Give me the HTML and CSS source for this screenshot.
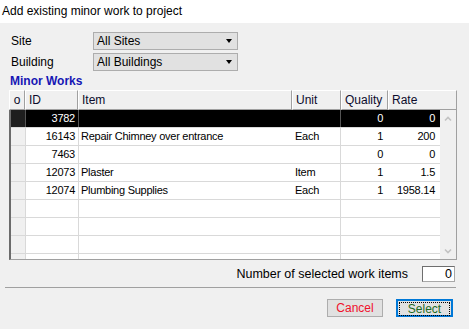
FILE: index.html
```html
<!DOCTYPE html>
<html>
<head>
<meta charset="utf-8">
<link rel="stylesheet" href="styles.css">
</head>
<body>
<div class="titlebar">Add existing minor work to project</div>
<div class="content">
  <div class="field">
    <span class="label">Site</span>
    <div class="combo"><span>All Sites</span><span class="arrow"></span></div>
  </div>
  <div class="field">
    <span class="label">Building</span>
    <div class="combo"><span>All Buildings</span><span class="arrow"></span></div>
  </div>
  <div class="section">Minor Works</div>
  <div class="grid">
    <div class="ghead">
      <div class="hc h-o">o</div>
      <div class="hc h-id">ID</div>
      <div class="hc h-item">Item</div>
      <div class="hc h-unit">Unit</div>
      <div class="hc h-qty">Quality</div>
      <div class="hc h-rate">Rate</div>
    </div>
    <div class="gbody">
      <div class="rows">
        <div class="row sel"><div class="c c-o"></div><div class="c c-id">3782</div><div class="c c-item"></div><div class="c c-unit"></div><div class="c c-qty">0</div><div class="c c-rate">0</div></div>
        <div class="row"><div class="c c-o"></div><div class="c c-id">16143</div><div class="c c-item">Repair Chimney over entrance</div><div class="c c-unit">Each</div><div class="c c-qty">1</div><div class="c c-rate">200</div></div>
        <div class="row"><div class="c c-o"></div><div class="c c-id">7463</div><div class="c c-item"></div><div class="c c-unit"></div><div class="c c-qty">0</div><div class="c c-rate">0</div></div>
        <div class="row"><div class="c c-o"></div><div class="c c-id">12073</div><div class="c c-item">Plaster</div><div class="c c-unit">Item</div><div class="c c-qty">1</div><div class="c c-rate">1.5</div></div>
        <div class="row"><div class="c c-o"></div><div class="c c-id">12074</div><div class="c c-item">Plumbing Supplies</div><div class="c c-unit">Each</div><div class="c c-qty">1</div><div class="c c-rate">1958.14</div></div>
        <div class="row"><div class="c c-o"></div><div class="c c-id"></div><div class="c c-item"></div><div class="c c-unit"></div><div class="c c-qty"></div><div class="c c-rate"></div></div>
        <div class="row"><div class="c c-o"></div><div class="c c-id"></div><div class="c c-item"></div><div class="c c-unit"></div><div class="c c-qty"></div><div class="c c-rate"></div></div>
        <div class="row"><div class="c c-o"></div><div class="c c-id"></div><div class="c c-item"></div><div class="c c-unit"></div><div class="c c-qty"></div><div class="c c-rate"></div></div>
        <div class="row"><div class="c c-o"></div><div class="c c-id"></div><div class="c c-item"></div><div class="c c-unit"></div><div class="c c-qty"></div><div class="c c-rate"></div></div>
      </div>
      <div class="vscroll">
        <svg class="chev" width="16" height="17" viewBox="0 0 16 17"><path d="M5 10.5 L8 7.5 L11 10.5" fill="none" stroke="#c2c2c2" stroke-width="1.6"/></svg>
        <svg class="chev" width="16" height="17" viewBox="0 0 16 17"><path d="M5 7.5 L8 10.5 L11 7.5" fill="none" stroke="#c2c2c2" stroke-width="1.6"/></svg>
      </div>
    </div>
  </div>
  <div class="countrow">
    <span class="countlabel">Number of selected work items</span>
    <div class="countbox">0</div>
  </div>
  <div class="sep"></div>
  <div class="buttons">
    <div class="btn cancel">Cancel</div>
    <div class="btn select"><span class="focus">Select</span></div>
  </div>
</div>
</body>
</html>
```
FILE: styles.css
```css
html, body {
  margin: 0;
  padding: 0;
}
body {
  width: 469px;
  height: 329px;
  background: #f0f0f0;
  font-family: "Liberation Sans", Arial, sans-serif;
  font-size: 12px;
  color: #000;
  overflow: hidden;
}
.titlebar {
  height: 23px;
  line-height: 22px;
  background: #fff;
  padding-left: 2px;
  box-sizing: border-box;
}
.content {
  padding-top: 9px;
}
.field {
  display: flex;
  align-items: center;
  height: 18px;
  margin-bottom: 3px;
  padding-left: 11px;
}
.label {
  width: 82px;
}
.combo {
  width: 145px;
  height: 18px;
  box-sizing: border-box;
  border: 1px solid #adadad;
  background: #e1e1e1;
  display: flex;
  align-items: center;
  justify-content: space-between;
  padding: 0 5px 0 3px;
}
.arrow {
  width: 0;
  height: 0;
  border-left: 3.5px solid transparent;
  border-right: 3.5px solid transparent;
  border-top: 4px solid #000;
}
.section {
  margin: 2px 0 0 10px;
  height: 14px;
  line-height: 14px;
  font-weight: bold;
  color: #1616b4;
}
.grid {
  margin: 2px 0 0 9px;
  width: 448px;
}
.ghead {
  display: flex;
  height: 20px;
}
.hc {
  box-sizing: border-box;
  height: 20px;
  line-height: 18px;
  border-top: 1px solid #fff;
  border-left: 1px solid #fff;
  border-right: 1px solid #a0a0a0;
  border-bottom: 1px solid #a0a0a0;
  background: #f0f0f0;
  padding-left: 3px;
  color: #0c0c2c;
  white-space: nowrap;
}
.h-o { width: 16px; padding-left: 0; text-align: center; }
.h-id { width: 53px; }
.h-item { width: 214px; }
.h-unit { width: 49px; }
.h-qty { width: 47px; }
.h-rate { width: 69px; }
.gbody {
  display: flex;
  height: 150px;
  box-sizing: border-box;
  border-left: 2px solid #6b6b6b;
  border-bottom: 1px solid #a0a0a0;
  border-right: 1px solid #a0a0a0;
}
.rows {
  width: 429px;
  height: 149px;
  overflow: hidden;
  background: #fff;
}
.row {
  display: flex;
  height: 18px;
  box-sizing: border-box;
  border-bottom: 1px solid #d9d9d9;
  font-size: 11px;
  letter-spacing: -0.25px;
  line-height: 17px;
}
.c {
  box-sizing: border-box;
  height: 17px;
  white-space: nowrap;
  overflow: hidden;
}
.c-o { width: 15px; background: #f0f0f0; border-right: 1px solid #d9d9d9; }
.c-id { width: 53px; border-right: 1px solid #d9d9d9; text-align: right; padding-right: 3px; }
.c-item { width: 213px; padding-left: 2px; }
.c-unit { width: 49px; border-right: 1px solid #d9d9d9; padding-left: 3px; }
.c-qty { width: 47px; text-align: right; padding-right: 5px; }
.c-rate { width: 52px; text-align: right; padding-right: 5px; }
.row.sel { background: #000; color: #fff; }
.row.sel .c-o { background: #1e1e1e; border-right-color: #555; }
.row.sel .c-id { border-right-color: #555; }
.row.sel .c-unit { border-right-color: #555; }
.vscroll {
  width: 16px;
  background: #f0f0f0;
  display: flex;
  flex-direction: column;
  justify-content: space-between;
}
.chev { display: block; }
.countrow {
  display: flex;
  justify-content: flex-end;
  align-items: center;
  margin-top: 6px;
  padding-right: 14px;
  height: 16px;
}
.countlabel {
  font-size: 12.5px;
  margin-right: 14px;
}
.countbox {
  width: 33px;
  height: 16px;
  box-sizing: border-box;
  border: 1px solid #6e6e6e;
  border-right-color: #a8a8a8;
  border-bottom-color: #a8a8a8;
  background: #fff;
  text-align: right;
  padding-right: 2px;
  line-height: 14px;
  font-size: 12.5px;
}
.sep {
  margin: 5px 13px 0 5px;
  border-top: 1px solid #a0a0a0;
}
.buttons {
  display: flex;
  justify-content: flex-end;
  margin-top: 11px;
  padding-right: 16px;
}
.btn {
  box-sizing: border-box;
  height: 18px;
  background: #e1e1e1;
  text-align: center;
  line-height: 16px;
}
.cancel {
  width: 56px;
  border: 1px solid #adadad;
  color: #f0102c;
  margin-right: 13px;
}
.select {
  width: 57px;
  border: 2px solid #0078d7;
  color: #1d6a1d;
  padding: 1px;
  line-height: 12px;
}
.focus {
  display: block;
  height: 12px;
  border: 1px dotted #000;
  line-height: 12px;
}
```
